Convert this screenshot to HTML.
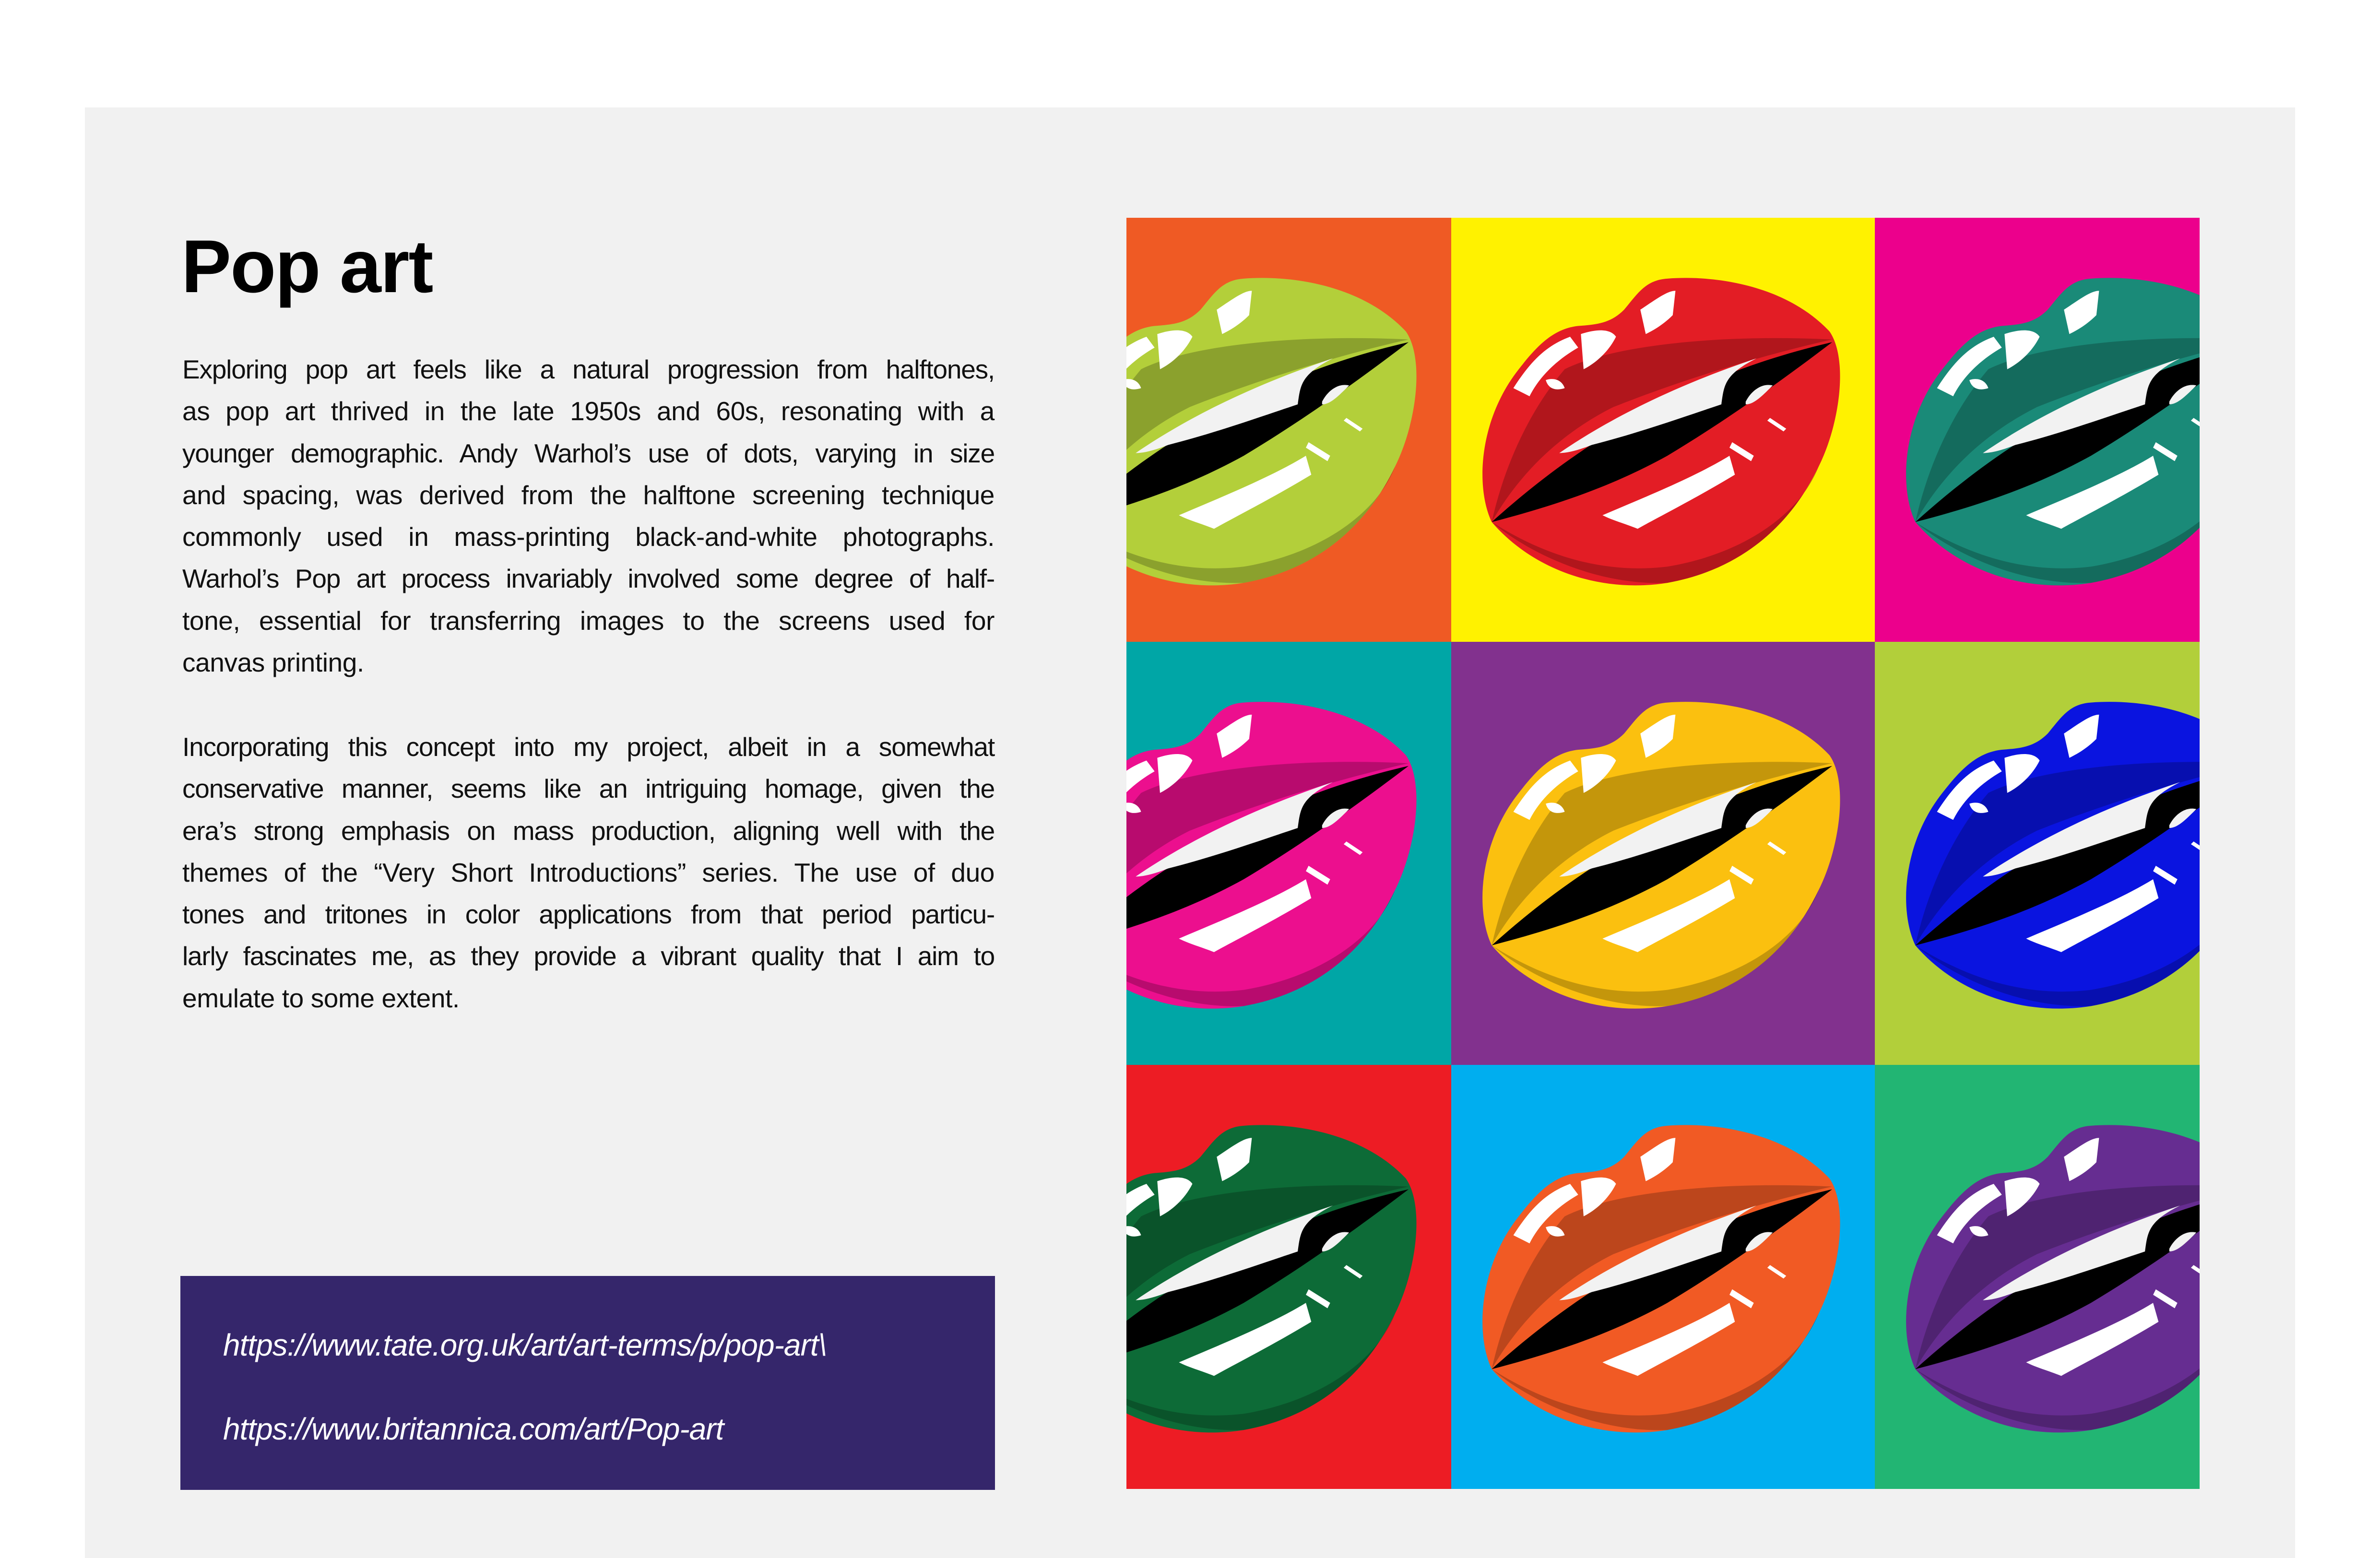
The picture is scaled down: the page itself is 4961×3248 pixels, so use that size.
<!DOCTYPE html>
<html><head><meta charset="utf-8">
<style>
html,body{margin:0;padding:0;}
body{width:4961px;height:3248px;background:#fff;position:relative;overflow:hidden;font-family:"Liberation Sans",sans-serif;}
.panel{position:absolute;left:177px;top:224px;width:4607px;height:3024px;background:#f1f1f1;}
h1{position:absolute;left:378px;top:478px;margin:0;font-size:156px;line-height:156px;font-weight:bold;color:#000;letter-spacing:-2px;}
.txt{position:absolute;left:380px;width:1693px;font-size:55px;line-height:87.3px;color:#111;letter-spacing:-0.4px;}
.txt div{text-align:justify;text-align-last:justify;white-space:nowrap;}
.txt div.l{text-align-last:left;}
.txt div.t{letter-spacing:-1.2px;}
.box{position:absolute;left:376px;top:2660px;width:1698px;height:446px;background:#35266b;}
.lk{position:absolute;left:465px;color:#fff;font-style:italic;font-size:64px;line-height:64px;letter-spacing:-1px;}
.grid{position:absolute;left:2348px;top:454px;width:2237px;height:2650px;}
.c{position:absolute;overflow:hidden;}
.c svg{position:absolute;top:0;}
</style></head><body>
<div class="panel"></div>
<h1>Pop art</h1>
<div class="txt" style="top:727px">
<div class="t">Exploring pop art feels like a natural progression from halftones,</div>
<div>as pop art thrived in the late 1950s and 60s, resonating with a</div>
<div class="t">younger demographic. Andy Warhol’s use of dots, varying in size</div>
<div>and spacing, was derived from the halftone screening technique</div>
<div>commonly used in mass-printing black-and-white photographs.</div>
<div class="t">Warhol’s Pop art process invariably involved some degree of half-</div>
<div>tone, essential for transferring images to the screens used for</div>
<div class="l">canvas printing.</div>
</div>
<div class="txt" style="top:1514px">
<div class="t">Incorporating this concept into my project, albeit in a somewhat</div>
<div class="t">conservative manner, seems like an intriguing homage, given the</div>
<div class="t">era’s strong emphasis on mass production, aligning well with the</div>
<div>themes of the “Very Short Introductions” series. The use of duo</div>
<div class="t">tones and tritones in color applications from that period particu-</div>
<div class="t">larly fascinates me, as they provide a vibrant quality that I aim to</div>
<div class="l">emulate to some extent.</div>
</div>
<div class="box"></div>
<div class="lk" style="top:2772px">https://www.tate.org.uk/art/art-terms/p/pop-art\</div>
<div class="lk" style="top:2947px">https://www.britannica.com/art/Pop-art</div>

<svg width="0" height="0" style="position:absolute">
<defs>
<g id="lips">
<path d="M150 1125 C90 1000,100 750,250 560 C320 470,380 410,470 400 C540 395,590 390,640 340 C690 280,720 230,800 225 C1000 210,1250 260,1400 420 C1470 520,1440 760,1360 920 C1260 1130,1080 1300,800 1350 C550 1390,300 1300,150 1125 Z" fill="currentColor"/>
<path d="M150 1125 C200 900,300 700,420 560 C600 470,1000 430,1410 450 C1100 520,800 620,600 700 C400 800,250 950,150 1125 Z" fill="#000" opacity="0.22"/>
<path d="M150 1125 C300 1250,550 1360,800 1350 C1080 1300,1260 1130,1360 920 C1300 1080,1100 1240,800 1290 C550 1320,330 1240,150 1125 Z" fill="#000" opacity="0.22"/>
<path d="M150 1125 C400 900,800 600,1410 460 C1200 620,1000 760,800 880 C600 990,400 1060,150 1125 Z" fill="#000"/>
<path d="M400 870 C560 760,800 630,1130 520 C1010 580,1010 620,1000 690 C850 740,680 800,520 840 C470 860,430 870,400 870 Z" fill="#f2f2f2"/>
<path d="M1090 680 C1110 640,1150 610,1190 620 C1150 660,1120 690,1090 690 Z" fill="#f2f2f2"/>
<path d="M560 1100 C700 1040,900 960,1030 880 L1050 950 C900 1040,780 1100,690 1150 C640 1130,600 1120,560 1100 Z" fill="#fff"/>
<path d="M230 630 C300 520,360 470,440 440 L470 480 C400 520,330 580,290 660 Z" fill="#fff"/>
<path d="M480 430 C540 410,590 410,610 440 C580 500,530 540,490 560 Z" fill="#fff"/>
<path d="M700 340 C760 300,800 270,830 270 L820 360 C780 400,740 420,720 430 Z" fill="#fff"/>
<path d="M350 600 C380 590,410 600,420 630 C390 640,360 635,350 600 Z" fill="#fff"/>
<path d="M1040 830 L1120 880 L1110 900 L1030 850 Z M1180 740 L1240 780 L1230 790 L1170 750 Z" fill="#fff"/>
</g>
</defs>
</svg>

<div class="grid">
<div class="c" style="left:0;top:0;width:677px;height:884px;background:#ef5a24;color:#b3cf3a"><svg style="right:0" width="883" height="884" viewBox="0 0 1568 1568" preserveAspectRatio="none"><use href="#lips"/></svg></div>
<div class="c" style="left:677px;top:0;width:883px;height:884px;background:#fff200;color:#e31d25"><svg style="left:0" width="883" height="884" viewBox="0 0 1568 1568" preserveAspectRatio="none"><use href="#lips"/></svg></div>
<div class="c" style="left:1560px;top:0;width:677px;height:884px;background:#ec008c;color:#1a8a78"><svg style="left:0" width="883" height="884" viewBox="0 0 1568 1568" preserveAspectRatio="none"><use href="#lips"/></svg></div>
<div class="c" style="left:0;top:884px;width:677px;height:882px;background:#00a6a6;color:#ec0f8e"><svg style="right:0" width="883" height="882" viewBox="0 0 1568 1568" preserveAspectRatio="none"><use href="#lips"/></svg></div>
<div class="c" style="left:677px;top:884px;width:883px;height:882px;background:#82318e;color:#fbc00f"><svg style="left:0" width="883" height="882" viewBox="0 0 1568 1568" preserveAspectRatio="none"><use href="#lips"/></svg></div>
<div class="c" style="left:1560px;top:884px;width:677px;height:882px;background:#b2cf3a;color:#0a14e0"><svg style="left:0" width="883" height="882" viewBox="0 0 1568 1568" preserveAspectRatio="none"><use href="#lips"/></svg></div>
<div class="c" style="left:0;top:1766px;width:677px;height:884px;background:#ed1c24;color:#0d6b37"><svg style="right:0" width="883" height="884" viewBox="0 0 1568 1568" preserveAspectRatio="none"><use href="#lips"/></svg></div>
<div class="c" style="left:677px;top:1766px;width:883px;height:884px;background:#00aeef;color:#f15a24"><svg style="left:0" width="883" height="884" viewBox="0 0 1568 1568" preserveAspectRatio="none"><use href="#lips"/></svg></div>
<div class="c" style="left:1560px;top:1766px;width:677px;height:884px;background:#22b573;color:#662d91"><svg style="left:0" width="883" height="884" viewBox="0 0 1568 1568" preserveAspectRatio="none"><use href="#lips"/></svg></div>
</div>
</body></html>
